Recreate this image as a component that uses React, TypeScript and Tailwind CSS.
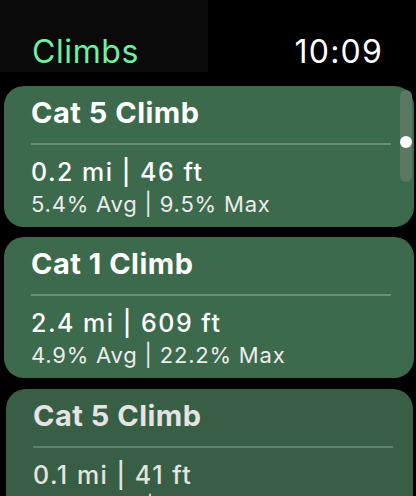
import React from 'react';

type Climb = {
  name: string;
  distance: string;
  grade: string;
};

const climbs: Climb[] = [
  { name: 'Cat 5 Climb', distance: '0.2 mi | 46 ft', grade: '5.4% Avg | 9.5% Max' },
  { name: 'Cat 1 Climb', distance: '2.4 mi | 609 ft', grade: '4.9% Avg | 22.2% Max' },
  { name: 'Cat 5 Climb', distance: '0.1 mi | 41 ft', grade: '2.0% Avg | 11.6% Max' },
];

function ClimbCard({ climb, faded }: { climb: Climb; faded?: boolean }) {
  return (
    <div
      className={
        faded
          ? 'ml-[6px] mr-[3px] rounded-[20px] bg-[#385f45] pl-[27px] pr-[20px] pt-[12px] pb-[12px]'
          : 'ml-[4px] mr-[2px] rounded-[20px] bg-[#3d6a4c] pl-[27px] pr-[23px] pt-[12px] pb-[12px]'
      }
    >
      <div
        className={
          faded
            ? 'text-[29px] leading-[29px] font-bold tracking-[0.5px] text-[#e4e4e4]'
            : 'text-[29px] leading-[29px] font-bold tracking-[0.5px] text-white'
        }
      >
        {climb.name}
      </div>
      <div className={faded ? 'mt-[16px] h-[2px] bg-[#5f8169]' : 'mt-[16px] h-[2px] bg-[#6a8f76]'} />
      <div
        className={
          faded
            ? 'mt-[15px] text-[25px] leading-[24px] font-medium tracking-[1.5px] whitespace-pre text-[#e4e4e4]'
            : 'mt-[15px] text-[25px] leading-[24px] font-medium tracking-[1.5px] whitespace-pre text-white'
        }
      >
        {climb.distance}
      </div>
      <div
        className={
          faded
            ? 'mt-[9px] text-[22px] leading-[22px] tracking-[0.8px] whitespace-pre text-[#dcdcdc]'
            : 'mt-[9px] text-[22px] leading-[22px] tracking-[0.8px] whitespace-pre text-[#ececec]'
        }
      >
        {climb.grade}
      </div>
    </div>
  );
}

export default function App() {
  return (
    <div
      className="w-[416px] h-[496px] overflow-hidden bg-black"
      style={{ fontFamily: 'Inter, "Open Sans", sans-serif' }}
    >
      <div className="flex h-[86px] items-start">
        <div className="w-[208px] h-[72px] bg-[#0a0a0a] pl-[32px] pt-[36px]">
          <span className="block text-[32px] leading-[32px] tracking-[0.6px] text-[#70f0a0]">Climbs</span>
        </div>
        <div className="flex-1 pt-[36px] pr-[33px] text-right">
          <span className="text-[32px] leading-[32px] tracking-[1.2px] text-white">10:09</span>
        </div>
      </div>

      <div className="relative flex flex-col gap-[10px]">
        {climbs.map((c, i) => (
          <div key={i} className={i === 2 ? 'mt-[1px]' : ''}>
            <ClimbCard climb={c} faded={i === 2} />
          </div>
        ))}

        {/* scroll indicator */}
        <div className="absolute left-[400px] top-[4px] h-[92px] w-[12px] rounded-full bg-[#5b7864]" />
        <div className="absolute left-[400px] top-[50px] h-[12px] w-[12px] rounded-full bg-white" />
      </div>
    </div>
  );
}
